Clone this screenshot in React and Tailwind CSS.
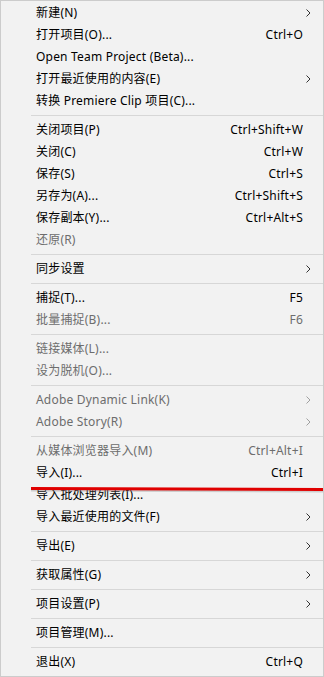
import React from 'react';

// File menu, Windows 10 style
const items = [
  { label: '新建(N)', sub: true },
  { label: '打开项目(O)...', key: 'Ctrl+O' },
  { label: 'Open Team Project (Beta)...' },
  { label: '打开最近使用的内容(E)', sub: true },
  { label: '转换 Premiere Clip 项目(C)...' },
  'sep',
  { label: '关闭项目(P)', key: 'Ctrl+Shift+W' },
  { label: '关闭(C)', key: 'Ctrl+W' },
  { label: '保存(S)', key: 'Ctrl+S' },
  { label: '另存为(A)...', key: 'Ctrl+Shift+S' },
  { label: '保存副本(Y)...', key: 'Ctrl+Alt+S' },
  { label: '还原(R)', off: true },
  'sep',
  { label: '同步设置', sub: true },
  'sep',
  { label: '捕捉(T)...', key: 'F5' },
  { label: '批量捕捉(B)...', key: 'F6', off: true },
  'sep',
  { label: '链接媒体(L)...', off: true },
  { label: '设为脱机(O)...', off: true },
  'sep',
  { label: 'Adobe Dynamic Link(K)', sub: true, off: true },
  { label: 'Adobe Story(R)', sub: true, off: true },
  'sep',
  { label: '从媒体浏览器导入(M)', key: 'Ctrl+Alt+I', off: true },
  { label: '导入(I)...', key: 'Ctrl+I' },
  { label: '导入批处理列表(I)...' },
  { label: '导入最近使用的文件(F)', sub: true },
  'sep',
  { label: '导出(E)', sub: true },
  'sep',
  { label: '获取属性(G)', sub: true },
  'sep',
  { label: '项目设置(P)', sub: true },
  'sep',
  { label: '项目管理(M)...' },
  'sep',
  { label: '退出(X)', key: 'Ctrl+Q' },
];

const Chevron = ({ off }) => (
  <svg width="5" height="8" viewBox="0 0 5 8" className="shrink-0">
    <path d="M0.5 0.5 L4 4 L0.5 7.5" fill="none" stroke={off ? '#a0a0a0' : '#333'} strokeWidth="1" />
  </svg>
);

const Row = ({ item }) => (
  <div className={`flex items-center h-[22px] pl-[35px] ${item.off ? 'text-[#6d6d6d]' : 'text-black'}`}>
    <span className="flex-1 whitespace-nowrap">{item.label}</span>
    {item.key && <span className="w-[100px] text-right whitespace-nowrap mr-[20px]">{item.key}</span>}
    {item.sub && (
      <span className="w-[20px] flex justify-start pl-[3px]">
        <Chevron off={item.off} />
      </span>
    )}
  </div>
);

export default function App() {
  return (
    <div
      className="relative w-[324px] h-[677px] bg-[#f2f2f2] border border-[#cccccc] pt-px text-[12px] tracking-[0.2px] overflow-hidden"
      style={{ fontFamily: '"Noto Sans", "Noto Sans CJK SC", sans-serif' }}
    >
      {items.map((it, i) =>
        it === 'sep' ? (
          <div key={i} className="h-[7px] pt-[3px] pl-[30px]">
            <div className="h-px bg-[#d7d7d7]" />
          </div>
        ) : (
          <Row key={i} item={it} />
        )
      )}
      <svg className="absolute left-0 top-[483px]" width="324" height="10">
        <line x1="30" y1="6.5" x2="324" y2="7.5" stroke="#8a8a8a" strokeOpacity="0.35" strokeWidth="2" />
        <line x1="30" y1="4.5" x2="324" y2="5.5" stroke="#e00000" strokeWidth="2.8" />
      </svg>
    </div>
  );
}
